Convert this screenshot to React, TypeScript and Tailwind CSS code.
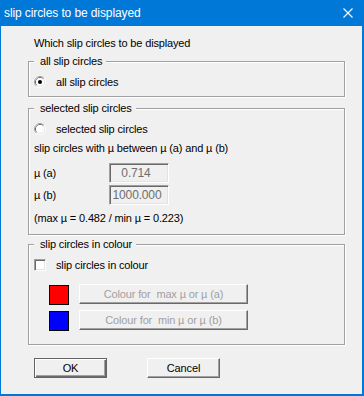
import React from 'react';

const font = { fontFamily: '"Liberation Sans", Arial, sans-serif' };

function Radio({ checked }: { checked?: boolean }) {
  return (
    <svg width="12" height="12" viewBox="0 0 12 12" className="shrink-0">
      <circle cx="6" cy="6" r="5.5" fill="none" stroke="#ffffff" />
      <path d="M9.89 2.11 A5.5 5.5 0 0 0 2.11 9.89" fill="none" stroke="#a0a0a0" />
      <circle cx="6" cy="6" r="4.5" fill="none" stroke="#e3e3e3" />
      <path d="M9.18 2.82 A4.5 4.5 0 0 0 2.82 9.18" fill="none" stroke="#696969" />
      <circle cx="6" cy="6" r="4" fill="#ffffff" />
      {checked && <circle cx="6" cy="6" r="2" fill="#000000" />}
    </svg>
  );
}

function Group({ title, className, children }: { title: string; className: string; children: React.ReactNode }) {
  return (
    <div className={`relative w-[317px] border border-t-[#a0a0a0] border-l-[#a0a0a0] border-b-[#a0a0a0] border-r-[#a0a0a0] shadow-[1px_1px_0_#ffffff,inset_1px_1px_0_#ffffff] pl-[5px] ${className}`}>
      {/* legend sits over the top line */}
      <span className="absolute left-[5px] top-[-7px] bg-[#f0f0f0] pl-[6px] pr-[4px] h-[13px] leading-[13px] text-[11px] tracking-[-0.15px] text-black">
        {title}
      </span>
      {children}
    </div>
  );
}

function Sunken({ value, className }: { value: string; className?: string }) {
  return (
    <div className={`w-[60px] h-[20px] border border-t-[#a0a0a0] border-l-[#a0a0a0] border-b-white border-r-white shadow-[inset_1px_1px_0_#696969,inset_-1px_-1px_0_#e3e3e3] bg-[#f0f0f0] text-[12px] leading-[18px] text-[#6d6d6d] text-center ${className ?? ''}`}>
      {value}
    </div>
  );
}

function FlatButton({ label }: { label: string }) {
  return (
    <div className="w-[169px] h-[20px] ml-[10px] border border-t-white border-l-white border-b-[#696969] border-r-[#696969] shadow-[inset_-1px_-1px_0_#a0a0a0] bg-[#f0f0f0] flex items-center justify-center text-[11px] tracking-[-0.15px] text-[#a0a0a0] whitespace-pre">
      {label}
    </div>
  );
}

export default function App() {
  return (
    <div className="w-[364px] h-[396px] bg-[#0078d7] flex flex-col" style={font}>
      <div className="h-[26px] shrink-0 flex items-center justify-between pl-[4px] pr-[11px] text-white text-[12px] tracking-[-0.1px]">
        <span>slip circles to be displayed</span>
        <svg width="10" height="10" viewBox="0 0 10 10">
          <path d="M0.5 0.5 L9.5 9.5 M9.5 0.5 L0.5 9.5" stroke="#ffffff" strokeWidth="1.1" />
        </svg>
      </div>

      <div className="flex-1 bg-[#f0f0f0] ml-[1px] mr-[2px] mb-[2px] pl-[27px] text-black text-[11px] tracking-[-0.15px]">
        <div className="pt-[11px] h-[24px] leading-[13px] pl-[6px]">Which slip circles to be displayed</div>

        <Group title="all slip circles" className="mt-[11px] h-[36px]">
          <div className="pt-[13px] h-[27px] flex items-center">
            <Radio checked />
            <span className="ml-[10px] leading-[14px]">all slip circles</span>
          </div>
        </Group>

        <Group title="selected slip circles" className="mt-[11px] h-[127px]">
          <div className="mt-[13px] h-[14px] flex items-center">
            <Radio />
            <span className="ml-[10px] leading-[14px]">selected slip circles</span>
          </div>
          <div className="mt-[5px] h-[14px] leading-[14px]">slip circles with µ between µ (a) and µ (b)</div>
          <div className="mt-[8px] h-[20px] flex items-center">
            <span className="w-[75px] leading-[14px]">µ (a)</span>
            <Sunken value="0.714" className="pr-[6px]" />
          </div>
          <div className="mt-[2px] h-[20px] flex items-center">
            <span className="w-[75px] leading-[14px]">µ (b)</span>
            <Sunken value="1000.000" className="pr-[4px]" />
          </div>
          <div className="mt-[6px] h-[14px] leading-[14px]">(max µ = 0.482 / min µ = 0.223)</div>
        </Group>

        <Group title="slip circles in colour" className="mt-[9px] h-[101px]">
          <div className="mt-[13px] h-[14px] flex items-center">
            <div className="w-[12px] h-[12px] bg-white border border-t-[#a0a0a0] border-l-[#a0a0a0] border-b-white border-r-white shadow-[inset_1px_1px_0_#696969,inset_-1px_-1px_0_#e3e3e3]" />
            <span className="ml-[10px] leading-[14px]">slip circles in colour</span>
          </div>
          <div className="mt-[12px] flex items-center pl-[15px]">
            <div className="w-[20px] h-[20px] bg-[#ff0000] border border-black translate-y-[1px]" />
            <FlatButton label="Colour for  max µ or µ (a)" />
          </div>
          <div className="mt-[6px] flex items-center pl-[15px]">
            <div className="w-[20px] h-[20px] bg-[#0000ff] border border-black translate-y-[1px]" />
            <FlatButton label="Colour for  min µ or µ (b)" />
          </div>
        </Group>

        <div className="mt-[13px] flex pl-[6px] gap-[40px]">
          <button className="w-[73px] h-[20px] border border-[#646464] shadow-[inset_1px_1px_0_#ffffff,inset_-1px_-1px_0_#696969,inset_-2px_-2px_0_#a0a0a0] bg-[#f0f0f0] text-[11px] leading-[16px] text-black">
            OK
          </button>
          <button className="w-[73px] h-[20px] border border-t-white border-l-white border-b-[#696969] border-r-[#696969] shadow-[inset_-1px_-1px_0_#a0a0a0] bg-[#f0f0f0] text-[11px] leading-[16px] text-black">
            Cancel
          </button>
        </div>
      </div>
    </div>
  );
}
